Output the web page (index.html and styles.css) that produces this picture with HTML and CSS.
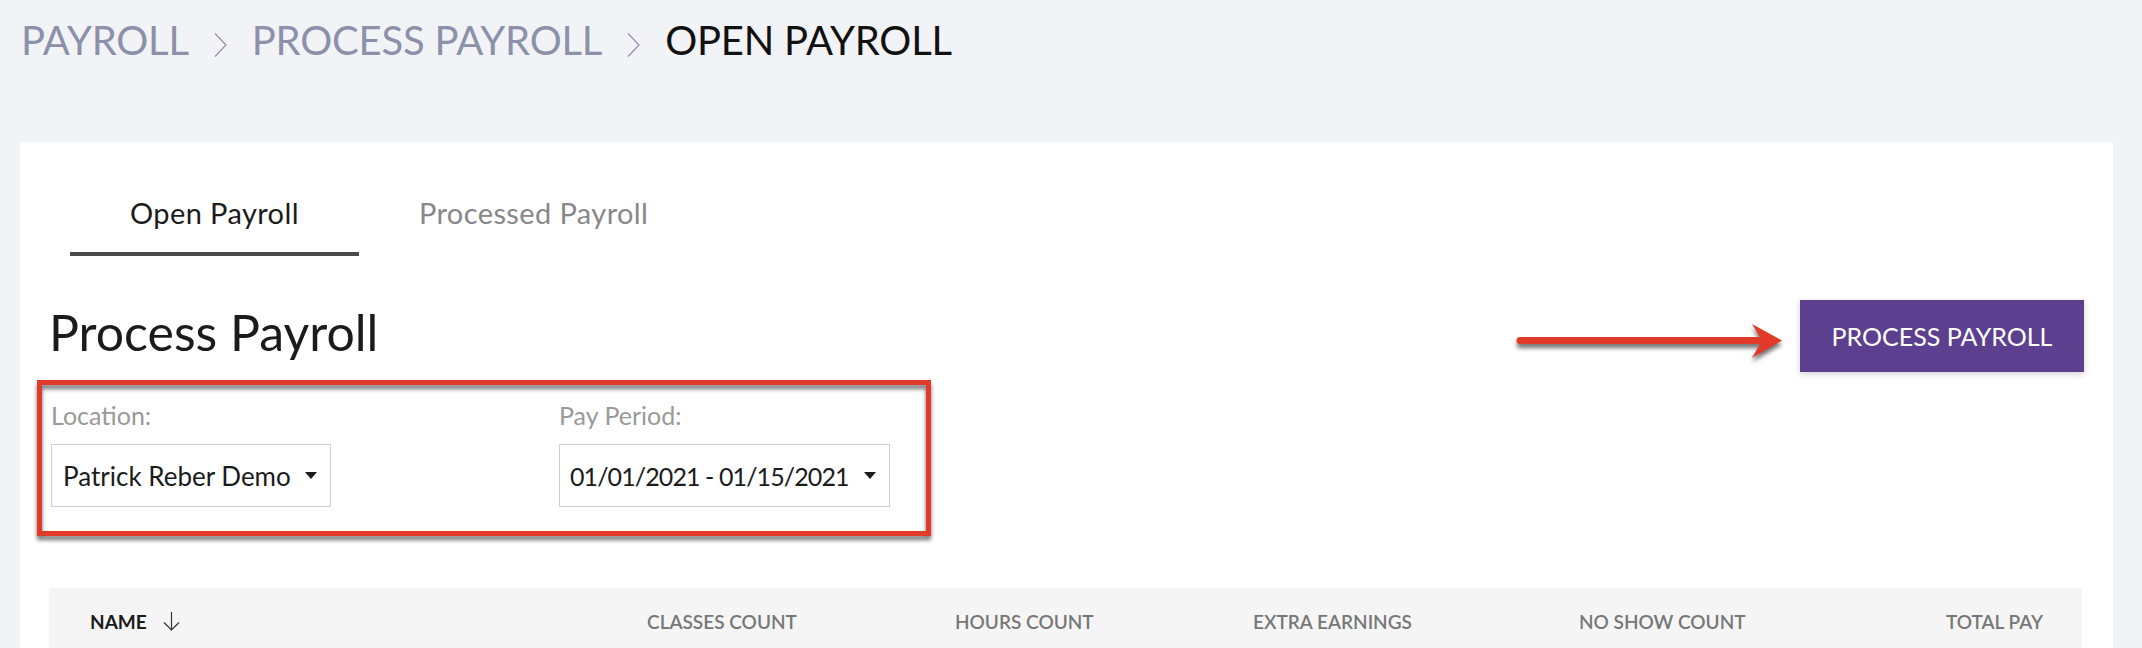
FILE: index.html
```html
<!DOCTYPE html>
<html lang="en">
<head>
    <meta charset="UTF-8">
    <meta name="viewport" content="width=device-width, initial-scale=1.0">
    <title>Open Payroll</title>
    <link rel="stylesheet" href="styles.css">
</head>
<body>
    <nav class="crumbs">
        <span class="crumb">PAYROLL</span>
        <svg class="crumb-sep" width="13" height="24" viewBox="0 0 13 24"><path d="M1 0.5 L12 12 L1 23.5"/></svg>
        <span class="crumb">PROCESS PAYROLL</span>
        <svg class="crumb-sep" width="13" height="24" viewBox="0 0 13 24"><path d="M1 0.5 L12 12 L1 23.5"/></svg>
        <span class="crumb current">OPEN PAYROLL</span>
    </nav>

    <main class="card">
        <div class="tabs">
            <div class="tab active">Open Payroll</div>
            <div class="tab">Processed Payroll</div>
        </div>

        <div class="page-head">
            <h2 class="page-title">Process Payroll</h2>
            <!-- annotation arrow pointing at the button -->
            <svg class="callout-arrow" width="276" height="50" viewBox="0 0 276 50">
                <line x1="11" y1="22.5" x2="252" y2="22.5" stroke="#e23a28" stroke-width="7" stroke-linecap="round"/>
                <polygon points="243,6 273,22.5 243,40 253,22.5" fill="#e23a28"/>
            </svg>
            <button class="btn-primary">PROCESS PAYROLL</button>
        </div>

        <div class="filters">
            <div class="callout-box"></div>
            <div class="filter">
                <label>Location:</label>
                <div class="dropdown loc"><span>Patrick Reber Demo</span><i class="caret"></i></div>
            </div>
            <div class="filter">
                <label>Pay Period:</label>
                <div class="dropdown period"><span>01/01/2021 - 01/15/2021</span><i class="caret"></i></div>
            </div>
        </div>

        <div class="table-head">
            <div class="th sorted">NAME
                <svg width="17" height="19" viewBox="0 0 17 19"><path d="M8.5 0 V18 M1 10.5 L8.5 18 L16 10.5"/></svg>
            </div>
            <div class="th">CLASSES COUNT</div>
            <div class="th">HOURS COUNT</div>
            <div class="th">EXTRA EARNINGS</div>
            <div class="th">NO SHOW COUNT</div>
            <div class="th last">TOTAL PAY</div>
        </div>
    </main>
</body>
</html>
```

FILE: styles.css
```css
* {
    box-sizing: border-box;
}
body {
    margin: 0;
    background-color: #f2f3f7;
    font-family: Lato, "Open Sans", sans-serif;
    color: #1b1b1b;
}

.crumbs {
    display: flex;
    align-items: flex-start;
    padding: 20px 0 0 21px;
}
.crumb {
    font-size: 40px;
    line-height: 40px;
    letter-spacing: -0.2px;
    color: #8c91a9;
}
.crumb.current {
    color: #111;
}
.crumb-sep {
    margin: 13px 25px 0 25px;
}
.crumb-sep path {
    fill: none;
    stroke: #8c91a9;
    stroke-width: 1.2;
}

.card {
    background-color: white;
    margin: 82px 29px 0 20px;
    padding: 51px 31px 40px 29px;
}

.tabs {
    display: flex;
    margin-left: 21px;
}
.tab {
    font-size: 29px;
    line-height: 40px;
    letter-spacing: 0.4px;
    padding: 0 60px 19px;
    color: #888;
    border-bottom: 4px solid transparent;
}
.tab.active {
    color: #1b1b1b;
    border-bottom-color: #4a4a4a;
}

.page-head {
    position: relative;
    display: flex;
    justify-content: space-between;
    align-items: flex-start;
    margin-top: 44px;
}
.page-title {
    margin: 2px 0 0;
    font-size: 50px;
    line-height: 60px;
    font-weight: 400;
}
.btn-primary {
    width: 284px;
    height: 72px;
    margin-right: -2px;
    border: none;
    background-color: #5d3f8f;
    color: #fff;
    font-family: Lato, sans-serif;
    font-size: 25px;
    box-shadow: 0 2px 7px rgba(0, 0, 0, 0.18);
}
.callout-arrow {
    position: absolute;
    right: 297px;
    top: 18px;
    overflow: visible;
    filter: drop-shadow(0 4px 2px rgba(0, 0, 0, 0.55));
}

.filters {
    position: relative;
    display: flex;
    gap: 228px;
    margin-top: 28px;
    padding-left: 2px;
}
.callout-box {
    position: absolute;
    left: -12px;
    top: -20px;
    width: 894px;
    height: 156px;
    border: 5px solid #e23a28;
    filter: drop-shadow(0 4px 2px rgba(0, 0, 0, 0.55));
    pointer-events: none;
}
.filter label {
    display: block;
    font-size: 25px;
    line-height: 30px;
    color: #999;
    margin-bottom: 14px;
}
.dropdown {
    display: flex;
    align-items: center;
    height: 63px;
    padding: 0 13px 0 11px;
    border: 1px solid #cfcfcf;
    font-size: 26px;
    color: #1b1b1b;
    white-space: nowrap;
}
.dropdown.loc {
    width: 280px;
}
.dropdown.period {
    width: 331px;
    padding-left: 10px;
    font-size: 25px;
    letter-spacing: -0.9px;
}
.caret {
    margin-left: auto;
    width: 0;
    height: 0;
    border-left: 6px solid transparent;
    border-right: 6px solid transparent;
    border-top: 7px solid #1b1b1b;
}

.table-head {
    display: grid;
    grid-template-columns: 557px 308px 298px 326px 366px 1fr;
    height: 90px;
    margin-top: 81px;
    padding: 22px 39px 0 41px;
    background-color: #f5f5f5;
}
.th {
    font-size: 19px;
    line-height: 24px;
    font-weight: 600;
    color: #777;
    white-space: nowrap;
}
.th.sorted {
    display: flex;
    align-items: flex-start;
    font-weight: 700;
    color: #1b1b1b;
}
.th.sorted svg {
    margin: 2px 0 0 16px;
}
.th.sorted path {
    fill: none;
    stroke: #333;
    stroke-width: 1.2;
}
.th.last {
    text-align: right;
}
```
